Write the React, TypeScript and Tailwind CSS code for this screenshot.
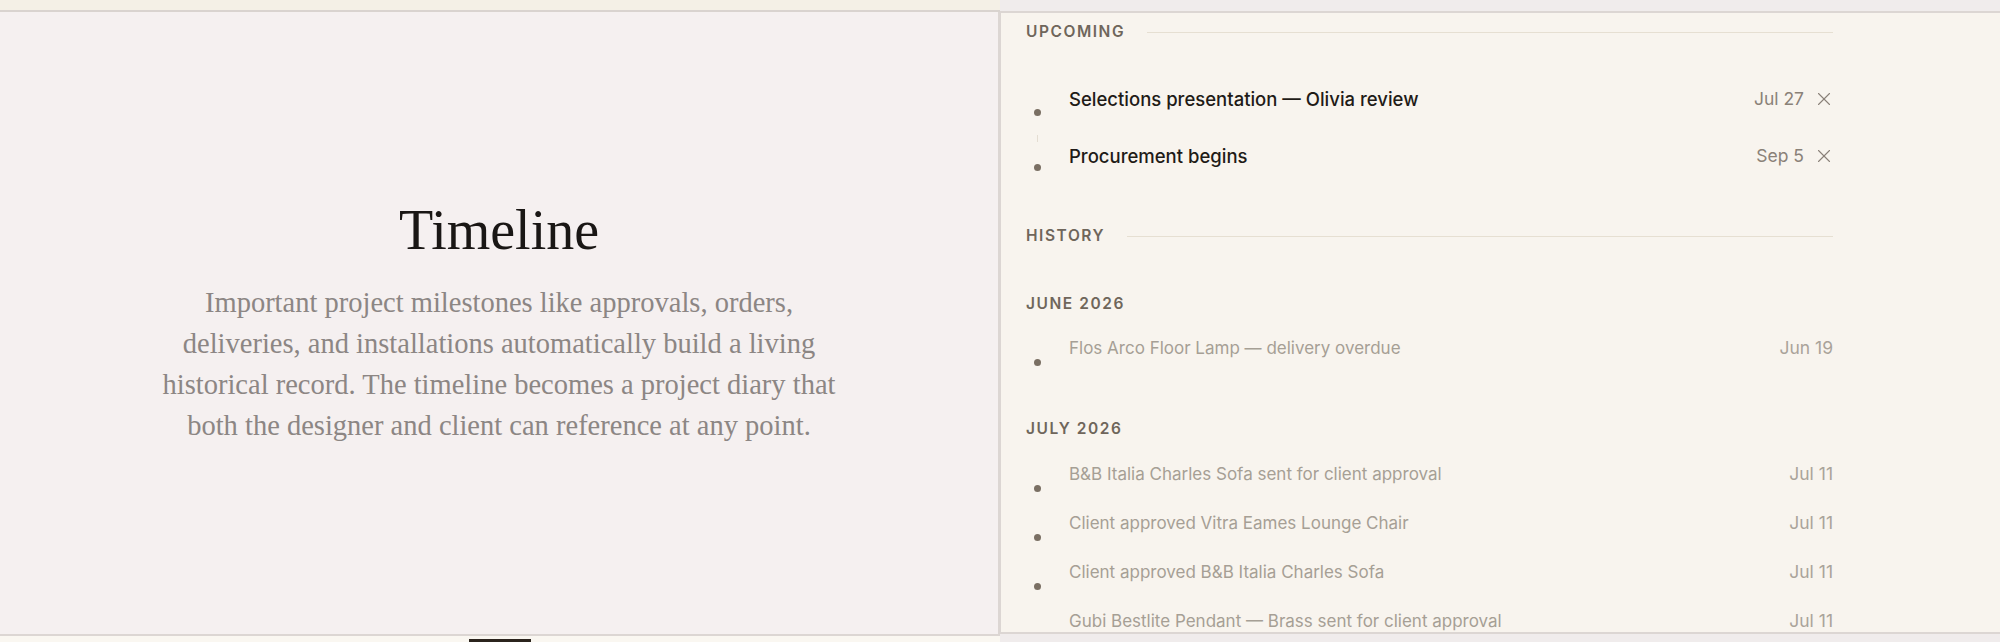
import { X } from "lucide-react";

const upcoming = [
  { t: "Selections presentation — Olivia review", d: "Jul 27", line: false },
  { t: "Procurement begins", d: "Sep 5", line: true },
];

const june = [{ t: "Flos Arco Floor Lamp — delivery overdue", d: "Jun 19" }];

const july = [
  { t: "B&B Italia Charles Sofa sent for client approval", d: "Jul 11" },
  { t: "Client approved Vitra Eames Lounge Chair", d: "Jul 11" },
  { t: "Client approved B&B Italia Charles Sofa", d: "Jul 11" },
  { t: "Gubi Bestlite Pendant — Brass sent for client approval", d: "Jul 11" },
];

function SectionHeader({ label }: { label: string }) {
  return (
    <div className="flex h-[20px] items-center gap-[22px]">
      <span className="text-[15.5px] font-semibold uppercase leading-[20px] tracking-[0.1em] text-[#6f665b]">
        {label}
      </span>
      <div className="h-px flex-1 bg-[#e6dfd2]" />
    </div>
  );
}

function MonthLabel({ label }: { label: string }) {
  return (
    <div className="h-[20px] text-[15.5px] font-semibold uppercase leading-[20px] tracking-[0.1em] text-[#6f665b]">
      {label}
    </div>
  );
}

function HistoryRow({ t, d }: { t: string; d: string }) {
  return (
    <div className="flex h-[49px] items-center">
      <div className="flex w-[43px] flex-col self-stretch pl-[7.5px] pt-[36px]">
        <div className="h-[7px] w-[7px] rounded-full bg-[#7a6f63]" />
      </div>
      <span className="flex-1 text-[17px] leading-[20px] text-[#a69f95]">{t}</span>
      <span className="text-[17.5px] leading-[20px] text-[#aaa39a]">{d}</span>
    </div>
  );
}

export default function App() {
  return (
    <div className="flex h-[642px] w-[2000px] overflow-hidden bg-[#efebeb] font-['Inter',sans-serif]">
      {/* Left slide */}
      <div className="flex w-[1000px] shrink-0 flex-col">
        <div className="h-[12px] shrink-0 border-b-2 border-[#d9d3cf] bg-[#f4f0e6]" />
        <div className="flex flex-1 flex-col items-center justify-center border-r-2 border-[#dcd6d3] bg-[#f5f0f0]">
          <h1 className="h-[60px] font-['Liberation_Serif',serif] text-[56px] font-normal leading-[60px] text-[#1a1715]">
            Timeline
          </h1>
          <p className="mt-[22px] text-center font-['Liberation_Serif',serif] text-[28.5px] leading-[41px] text-[#8c8684]">
            <span className="block">Important project milestones like approvals, orders,</span>
            <span className="block">deliveries, and installations automatically build a living</span>
            <span className="block">historical record. The timeline becomes a project diary that</span>
            <span className="block">both the designer and client can reference at any point.</span>
          </p>
        </div>
        <div className="flex h-[8px] shrink-0 items-end justify-center border-t-2 border-[#dcd6d3] bg-[#faf7f1]">
          <div className="h-[3px] w-[62px] bg-[#2b241d]" />
        </div>
      </div>

      {/* Right slide */}
      <div className="flex w-[1000px] shrink-0 flex-col">
        <div className="h-[13px] shrink-0 border-b-2 border-[#dcd6d3] bg-[#f0ecec]" />
        <div className="flex-1 overflow-hidden border-l border-[#dcd6d3] bg-[#f8f4ee] pl-[25px]">
          <div className="w-[807px] pt-[9px]">
            <SectionHeader label="Upcoming" />
            <div className="mt-[28px]">
              {upcoming.map((u) => (
                <div key={u.t} className="flex h-[57px] items-center">
                  <div className="flex w-[43px] flex-col self-stretch pl-[7.5px]">
                    {u.line ? (
                      <>
                        <div className="ml-[3px] mt-[8px] h-[7px] w-px bg-[#e4ddd2]" />
                        <div className="mt-[22px] h-[7px] w-[7px] rounded-full bg-[#7a6f63]" />
                      </>
                    ) : (
                      <div className="mt-[39px] h-[7px] w-[7px] rounded-full bg-[#7a6f63]" />
                    )}
                  </div>
                  <span className="flex-1 text-[18.5px] font-medium leading-[22px] text-[#1f1b17]">{u.t}</span>
                  <span className="text-[17.5px] leading-[22px] text-[#8a8178]">{u.d}</span>
                  <span className="ml-[9px] mr-[-2px] flex w-[22px] items-center justify-center text-[#8a8178]">
                    <X size={22} strokeWidth={1.2} />
                  </span>
                </div>
              ))}
            </div>

            <div className="mt-[42px]">
              <SectionHeader label="History" />
            </div>

            <div className="mt-[48px]">
              <MonthLabel label="June 2026" />
            </div>
            <div className="mt-[9px]">
              {june.map((r) => (
                <HistoryRow key={r.t} t={r.t} d={r.d} />
              ))}
            </div>

            <div className="mt-[47px]">
              <MonthLabel label="July 2026" />
            </div>
            <div className="mt-[10px]">
              {july.map((r) => (
                <HistoryRow key={r.t} t={r.t} d={r.d} />
              ))}
            </div>
          </div>
        </div>
        <div className="h-[10px] shrink-0 border-t-2 border-[#dcd6d3] bg-[#f0ecec]" />
      </div>
    </div>
  );
}
